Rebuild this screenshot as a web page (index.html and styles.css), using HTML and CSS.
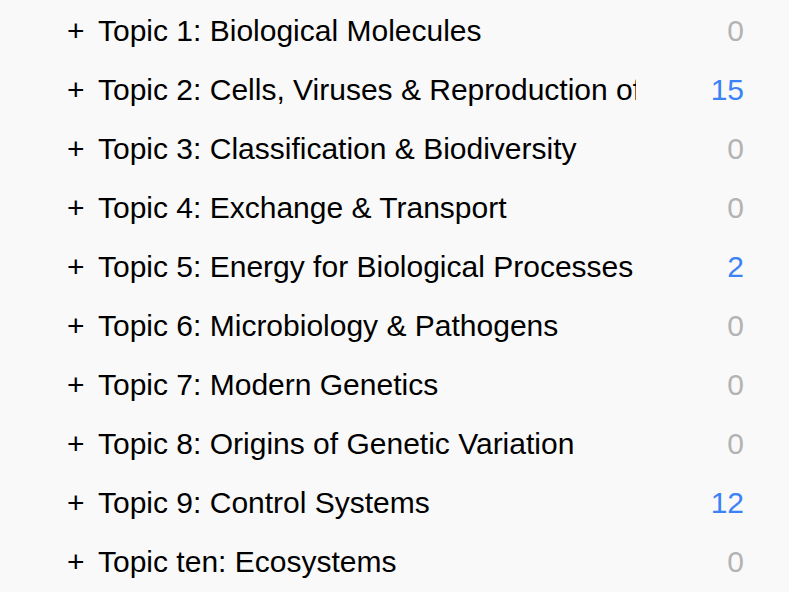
FILE: index.html
```html
<!DOCTYPE html>
<html>
<head>
<meta charset="utf-8">
<link rel="stylesheet" href="styles.css">
</head>
<body>
<ul class="topics">
  <li class="topic"><span class="plus">+</span><span class="title">Topic 1: Biological Molecules</span><span class="count zero">0</span></li>
  <li class="topic"><span class="plus">+</span><span class="title">Topic 2: Cells, Viruses &amp; Reproduction of Living Things</span><span class="count active">15</span></li>
  <li class="topic"><span class="plus">+</span><span class="title">Topic 3: Classification &amp; Biodiversity</span><span class="count zero">0</span></li>
  <li class="topic"><span class="plus">+</span><span class="title">Topic 4: Exchange &amp; Transport</span><span class="count zero">0</span></li>
  <li class="topic"><span class="plus">+</span><span class="title">Topic 5: Energy for Biological Processes</span><span class="count active">2</span></li>
  <li class="topic"><span class="plus">+</span><span class="title">Topic 6: Microbiology &amp; Pathogens</span><span class="count zero">0</span></li>
  <li class="topic"><span class="plus">+</span><span class="title">Topic 7: Modern Genetics</span><span class="count zero">0</span></li>
  <li class="topic"><span class="plus">+</span><span class="title">Topic 8: Origins of Genetic Variation</span><span class="count zero">0</span></li>
  <li class="topic"><span class="plus">+</span><span class="title">Topic 9: Control Systems</span><span class="count active">12</span></li>
  <li class="topic"><span class="plus">+</span><span class="title">Topic ten: Ecosystems</span><span class="count zero">0</span></li>
</ul>
</body>
</html>
```
FILE: styles.css
```css
html, body {
  margin: 0;
  padding: 0;
  background: #f9f9f9;
}
body {
  font-family: "Liberation Sans", Arial, Helvetica, sans-serif;
  color: #000;
}
.topics {
  list-style: none;
  margin: 0;
  padding: 1px 0 0 67px;
}
.topic {
  display: flex;
  align-items: center;
  height: 59px;
  font-size: 30px;
}
.plus {
  width: 31px;
  flex: 0 0 31px;
}
.title {
  flex: 0 0 538px;
  white-space: nowrap;
  overflow: hidden;
}
.count {
  flex: 0 0 108px;
  text-align: right;
}
.zero { color: #b3b3b3; }
.active { color: #3b82f6; }
```
